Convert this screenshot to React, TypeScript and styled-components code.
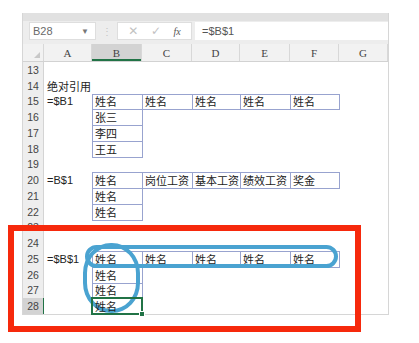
import React from "react";
import styled, { createGlobalStyle } from "styled-components";

const GlobalStyle = createGlobalStyle`
  html, body {
    margin: 0;
    padding: 0;
    background: #ffffff;
  }
  body {
    font-family: "Liberation Sans", "Noto Sans CJK SC", sans-serif;
  }
`;

const COLS = "21px 48px 50px 50px 48px 50px 49px 49px";
const ROW_H = 15.75;

const Screen = styled.div`
  position: relative;
  width: 419px;
  height: 343px;
  padding: 13px 0 0 22px;
  box-sizing: border-box;
  overflow: hidden;
  background: #ffffff;
`;

const Window = styled.div`
  width: 367px;
  border: 1px solid #d6d6d6;
  border-top: none;
  box-sizing: border-box;
  background: #ffffff;
`;

const TopBand = styled.div`
  height: 8px;
  background: #e1e1e1;
`;

const FormulaBar = styled.div`
  height: 23px;
  box-sizing: border-box;
  padding: 1px 0 4px 6px;
  background: #ededed;
  display: flex;
  align-items: stretch;
`;

const NameBox = styled.div`
  width: 67px;
  background: #ffffff;
  border: 1px solid #dedede;
  box-sizing: border-box;
  display: flex;
  align-items: center;
  justify-content: space-between;
  padding: 0 6px 0 3px;
  font-size: 11px;
  color: #6a6a6a;
`;

const Caret = styled.span`
  font-size: 8px;
  color: #777;
`;

const Dots = styled.div`
  width: 21px;
  display: flex;
  align-items: center;
  justify-content: center;
  color: #c4c4c4;
  font-size: 10px;
`;

const ButtonBox = styled.div`
  width: 75px;
  background: #ffffff;
  border: 1px solid #dedede;
  box-sizing: border-box;
  display: flex;
  align-items: center;
  justify-content: space-around;
  padding: 0 4px;
`;

const BarIcon = styled.span<{ $dark?: boolean }>`
  font-size: ${(p) => (p.$dark ? "10px" : "12px")};
  color: ${(p) => (p.$dark ? "#555" : "#c2c2c2")};
  font-family: ${(p) => (p.$dark ? '"Liberation Serif", serif' : '"DejaVu Sans", sans-serif')};
  font-style: ${(p) => (p.$dark ? "italic" : "normal")};
`;

const FormulaInput = styled.div`
  flex: 1;
  margin-left: 3px;
  background: #ffffff;
  display: flex;
  align-items: center;
  padding-left: 7px;
  font-size: 11px;
  color: #555;
`;

const HeaderRow = styled.div`
  display: grid;
  grid-template-columns: ${COLS};
  height: 18px;
  background: #f2f2f2;
  border-bottom: 1px solid #d2d2d2;
  box-sizing: border-box;
`;

const Corner = styled.div`
  position: relative;
  border-right: 1px solid #d8d8d8;

  &::after {
    content: "";
    position: absolute;
    right: 3px;
    bottom: 3px;
    border-left: 6px solid transparent;
    border-bottom: 6px solid #c8c8c8;
  }
`;

const ColHead = styled.div<{ $active?: boolean }>`
  display: flex;
  align-items: center;
  justify-content: center;
  font-family: "Liberation Serif", serif;
  font-size: 11px;
  color: #444;
  border-right: 1px solid #d8d8d8;
  background: ${(p) => (p.$active ? "#d3d3d3" : "transparent")};
  box-shadow: ${(p) => (p.$active ? "inset 0 -2px 0 #217346" : "none")};
`;

const Sheet = styled.div`
  display: grid;
  grid-template-columns: ${COLS};
  grid-auto-rows: ${ROW_H}px;
`;

const RowHead = styled.div<{ $active?: boolean }>`
  display: flex;
  align-items: center;
  justify-content: center;
  font-size: 10.5px;
  color: #444;
  background: ${(p) => (p.$active ? "#d3d3d3" : "#eeeeee")};
  border-right: 1px solid ${(p) => (p.$active ? "#217346" : "#d4d4d4")};
`;

const Cell = styled.div<{ $boxed?: boolean; $selected?: boolean }>`
  position: relative;
  display: flex;
  align-items: center;
  padding-left: 3px;
  font-size: 11px;
  color: #222;
  white-space: nowrap;
  overflow: visible;
  box-shadow: ${(p) =>
    p.$boxed
      ? "1px 0 0 0 #98a3cf, 0 1px 0 0 #98a3cf, 1px 1px 0 0 #98a3cf, 1px 0 0 0 #98a3cf inset, 0 1px 0 0 #98a3cf inset"
      : "none"};

  ${(p) =>
    p.$selected &&
    `
    outline: 2px solid #217346;
    outline-offset: -1px;
    z-index: 1;
    &::after {
      content: "";
      position: absolute;
      right: -3px;
      bottom: -3px;
      width: 4px;
      height: 4px;
      background: #217346;
      border: 1px solid #fff;
    }
  `}
`;

const Frame = styled.div<{ $x: number; $y: number; $w: number; $h: number }>`
  position: absolute;
  left: ${(p) => p.$x}px;
  top: ${(p) => p.$y}px;
  width: ${(p) => p.$w}px;
  height: ${(p) => p.$h}px;
  box-sizing: border-box;
  border: 6px solid #f6290c;
  pointer-events: none;
`;

const Ring = styled.div<{ $x: number; $y: number; $w: number; $h: number; $r: string }>`
  position: absolute;
  left: ${(p) => p.$x}px;
  top: ${(p) => p.$y}px;
  width: ${(p) => p.$w}px;
  height: ${(p) => p.$h}px;
  box-sizing: border-box;
  border: 4px solid #4aa3d1;
  border-radius: ${(p) => p.$r};
  pointer-events: none;
`;

type CellData = { text?: string; boxed?: boolean };

const t = (text: string): CellData => ({ text, boxed: true });
const p = (text: string): CellData => ({ text });
const e: CellData = {};
const names5 = [t("姓名"), t("姓名"), t("姓名"), t("姓名"), t("姓名")];

const rows: { n: number; cells: CellData[] }[] = [
  { n: 13, cells: [] },
  { n: 14, cells: [p("绝对引用")] },
  { n: 15, cells: [p("=$B1"), ...names5] },
  { n: 16, cells: [e, t("张三")] },
  { n: 17, cells: [e, t("李四")] },
  { n: 18, cells: [e, t("王五")] },
  { n: 19, cells: [] },
  {
    n: 20,
    cells: [p("=B$1"), t("姓名"), t("岗位工资"), t("基本工资"), t("绩效工资"), t("奖金")],
  },
  { n: 21, cells: [e, t("姓名")] },
  { n: 22, cells: [e, t("姓名")] },
  { n: 23, cells: [] },
  { n: 24, cells: [] },
  { n: 25, cells: [p("=$B$1"), ...names5] },
  { n: 26, cells: [e, t("姓名")] },
  { n: 27, cells: [e, t("姓名")] },
  { n: 28, cells: [e, t("姓名")] },
];

const letters = ["A", "B", "C", "D", "E", "F", "G"];

const App = () => {
  return (
    <>
      <GlobalStyle />
      <Screen>
        <Window>
          <TopBand />
          <FormulaBar>
            <NameBox>
              <span>B28</span>
              <Caret>▼</Caret>
            </NameBox>
            <Dots>⋮</Dots>
            <ButtonBox>
              <BarIcon>✕</BarIcon>
              <BarIcon>✓</BarIcon>
              <BarIcon $dark>fx</BarIcon>
            </ButtonBox>
            <FormulaInput>=$B$1</FormulaInput>
          </FormulaBar>
          <HeaderRow>
            <Corner />
            {letters.map((l) => (
              <ColHead key={l} $active={l === "B"}>
                {l}
              </ColHead>
            ))}
          </HeaderRow>
          <Sheet>
            {rows.map((r) => (
              <React.Fragment key={r.n}>
                <RowHead $active={r.n === 28}>{r.n}</RowHead>
                {letters.map((l, i) => {
                  const c = r.cells[i] || e;
                  return (
                    <Cell
                      key={l}
                      $boxed={c.boxed}
                      $selected={r.n === 28 && l === "B"}
                    >
                      {c.text}
                    </Cell>
                  );
                })}
              </React.Fragment>
            ))}
          </Sheet>
        </Window>
        <Frame $x={8} $y={225} $w={353} $h={107} />
        <Ring $x={85} $y={245} $w={253} $h={23} $r="12px" />
        <Ring $x={83} $y={243} $w={57} $h={70} $r="28px / 30px" />
      </Screen>
    </>
  );
};

export default App;
